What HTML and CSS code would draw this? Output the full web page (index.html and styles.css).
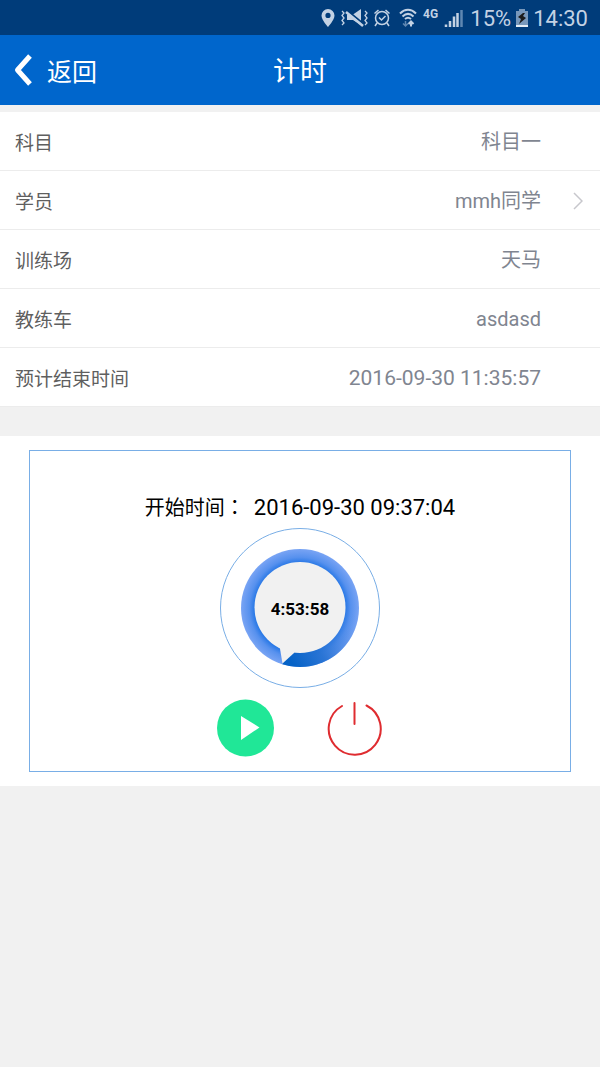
FILE: index.html
```html
<!DOCTYPE html>
<html lang="zh-CN">
<head>
  <meta charset="UTF-8" />
  <meta name="viewport" content="width=device-width, initial-scale=1.0" />
  <title>计时</title>
  <link rel="stylesheet" href="styles.css">
</head>
<body>
  <div class="status-bar">
    <svg class="status-icons" width="144" height="24" viewBox="0 0 144 24" fill="none" stroke="#c3d2e4">
      <!-- location -->
      <path fill="#c3d2e4" stroke="none" fill-rule="evenodd" d="M9 2a6.5 6.5 0 0 0-6.5 6.500C2.500 13 9 20 9 20s6.500-7 6.500-11.500A6.500 6.500 0 0 0 9 2zm0 3.800a2.600 2.600 0 1 1 0 5.200 2.600 2.600 0 0 1 0-5.200z"/>
      <!-- vibrate / mute -->
      <path stroke-width="1.300" d="M23 4l2 2-2 2.500 2 2.500-2 2.500 2 2.500-2 2M46 4l2 2-2 2.500 2 2.500-2 2.500 2 2.500-2 2"/>
      <path fill="#c3d2e4" stroke="none" d="M28 7.500h6l8-5.500v16l-8-5h-6z"/>
      <path stroke="#003c7a" stroke-width="2" d="M27 2.500l17 14"/>
      <path stroke-width="2.500" d="M27 5l17 14"/>
      <!-- alarm -->
      <circle cx="63" cy="11" r="6.500" stroke-width="1.500"/>
      <path stroke-width="1.500" d="M60 10.500l2.500 2.500 4-4M55.500 6.500l4-3.500M70.500 6.500l-4-3.500M58 16l-2 3M68 16l2 3"/>
      <!-- wifi -->
      <path stroke-width="2" d="M81 6.500c5-5 11-5 16 0M83.500 9.500c3.500-3.300 7.500-3.300 11 0M86 12c2-1.700 4-1.700 6 0"/>
      <path stroke-width="2" d="M92 19.500v-5M89.500 17l2.500-2.500 2.500 2.500"/>
      <path stroke="#5f87b2" stroke-width="1.500" d="M86.500 14v5M84 16.500l2.500 2.500 2.500-2.500"/>
      <!-- signal -->
      <path stroke-width="2.500" d="M127 20v-2.500M131 20v-6M135 20V9.500"/>
      <path stroke-width="2.500" d="M138.500 20V6"/>
      <path stroke="#5f87b2" stroke-width="2.500" d="M142.500 20V3"/>
      <text class="network" x="104" y="11">4G</text>
    </svg>
    <span>15%</span>
    <svg width="12" height="20" viewBox="0 0 12 20">
      <path fill="#7898bb" d="M3 0h6v2h3v16H0V2h3z"/>
      <path fill="#e4edf6" d="M0 16h12v2H0z"/>
      <path fill="#1b1b1b" d="M7 4L2 8l3 2-2 5 7-6-3-2 2-3z"/>
    </svg>
    <span>14:30</span>
  </div>

  <header class="header">
    <button class="back" type="button">
      <svg width="18" height="32" viewBox="0 0 18 32" fill="none" stroke="#fff" stroke-width="5" stroke-linejoin="round">
        <path d="M16 2L3.500 16 16 30"/>
      </svg>
      返回
    </button>
    <h1>计时</h1>
  </header>

  <main>
    <dl class="info-list">
      <div class="row"><dt>科目</dt><dd>科目一</dd></div>
      <div class="row">
        <dt>学员</dt>
        <dd>mmh同学</dd>
        <svg class="arrow" width="10" height="18" viewBox="0 0 10 18" fill="none" stroke="#c7c7cc" stroke-width="1.500">
          <path d="M1 1l8 8-8 8"/>
        </svg>
      </div>
      <div class="row"><dt>训练场</dt><dd>天马</dd></div>
      <div class="row"><dt>教练车</dt><dd>asdasd</dd></div>
      <div class="row"><dt>预计结束时间</dt><dd class="date">2016-09-30 11:35:57</dd></div>
    </dl>

    <section class="timer-panel">
      <div class="timer-box">
        <p class="start-time">开始时间<span class="colon" lang="zh-TW">：</span> <time>2016-09-30 09:37:04</time></p>

        <svg class="dial" width="160" height="160" viewBox="0 0 160 160">
          <defs>
            <radialGradient id="ring" gradientUnits="userSpaceOnUse" cx="80" cy="80" r="59">
              <stop offset="0.770" stop-color="#2878e6"/>
              <stop offset="0.860" stop-color="#5791ee"/>
              <stop offset="1" stop-color="#79a4f4"/>
            </radialGradient>
            <linearGradient id="sweep" gradientUnits="userSpaceOnUse" x1="74" y1="137" x2="134" y2="86">
              <stop offset="0" stop-color="#0562c6"/>
              <stop offset="0.350" stop-color="#2471d2" stop-opacity="0.900"/>
              <stop offset="1" stop-color="#5a92ec" stop-opacity="0"/>
            </linearGradient>
          </defs>
          <circle cx="80" cy="80" r="79.500" fill="#fff" stroke="#79aee6"/>
          <circle cx="80" cy="80" r="59" fill="url(#ring)"/>
          <path fill="url(#sweep)" d="M80 80L62.500 136.300A59 59 0 0 0 139 80z"/>
          <circle cx="80" cy="79.500" r="45.500" fill="#f1f1f1"/>
          <path fill="#f1f1f1" d="M58.500 112l4 23.500L74 125l6-9z"/>
          <text class="elapsed" x="80" y="87" text-anchor="middle">4:53:58</text>
        </svg>

        <div class="controls">
          <button type="button" aria-label="开始">
            <svg width="58" height="58" viewBox="0 0 58 58">
              <circle cx="28.500" cy="29" r="28.500" fill="#20e797"/>
              <path fill="#fff" d="M24 17l18.500 11.500L24 41z"/>
            </svg>
          </button>
          <button type="button" aria-label="结束">
            <svg width="58" height="58" viewBox="0 0 58 58" fill="none" stroke="#df2c30" stroke-width="2" stroke-linecap="round">
              <path d="M16 7A26 26 0 1 0 40.500 6.500"/>
              <path d="M28.500 4v21"/>
            </svg>
          </button>
        </div>
      </div>
    </section>
  </main>
</body>
</html>
```

FILE: styles.css
```css
* {
  margin: 0;
  padding: 0;
  box-sizing: border-box;
}
body {
  background: #f1f1f1;
  font-family: Roboto, "Noto Sans CJK SC", sans-serif;
  font-size: 19px;
  line-height: 30px;
}
svg {
  display: block;
}
button {
  background: none;
  border: none;
  color: inherit;
  font: inherit;
  cursor: pointer;
}
.status-bar {
  display: flex;
  justify-content: flex-end;
  align-items: center;
  gap: 5px;
  height: 35px;
  padding: 2px 12px 0 0;
  background: #003c7a;
  color: #c3d2e4;
  font-size: 22px;
}
.status-icons {
  margin-right: 2px;
}
.network {
  fill: #c3d2e4;
  stroke: none;
  font-size: 12px;
  font-weight: bold;
}
.header {
  display: grid;
  grid-template-columns: 1fr auto 1fr;
  align-items: center;
  height: 70px;
  padding: 0 14px;
  background: #0066cc;
  color: #fff;
  font-family: "Noto Sans CJK SC", sans-serif;
}
.header h1 {
  font-size: 27px;
  font-weight: normal;
}
.back {
  display: flex;
  align-items: center;
  gap: 15px;
  font-size: 25px;
}
.info-list {
  margin: 7px 0 29px;
}
.row {
  position: relative;
  display: flex;
  justify-content: space-between;
  align-items: center;
  height: 59px;
  padding: 2px 59px 0 15px;
  background: #fff;
  border-bottom: 1px solid #ececec;
}
.row dt {
  color: #5f5f5f;
  font-family: "Noto Sans CJK SC", sans-serif;
}
.row dd {
  color: #808590;
  font-size: 20px;
}
.row .date {
  font-size: 21px;
}
.arrow {
  position: absolute;
  right: 17px;
}
.timer-panel {
  padding: 14px 29px;
  background: #fff;
}
.timer-box {
  display: flex;
  flex-direction: column;
  align-items: center;
  padding: 41px 0 14px;
  border: 1px solid #79aee6;
}
.start-time {
  color: #000;
  font-size: 20px;
}
.start-time time {
  margin-left: 4px;
  font-size: 22px;
}
.colon {
  font-family: "Noto Sans CJK TC", sans-serif;
}
.dial {
  margin: 5px 0 11px;
}
.elapsed {
  font-size: 17px;
  font-weight: bold;
}
.controls {
  display: flex;
  gap: 51px;
}
```
